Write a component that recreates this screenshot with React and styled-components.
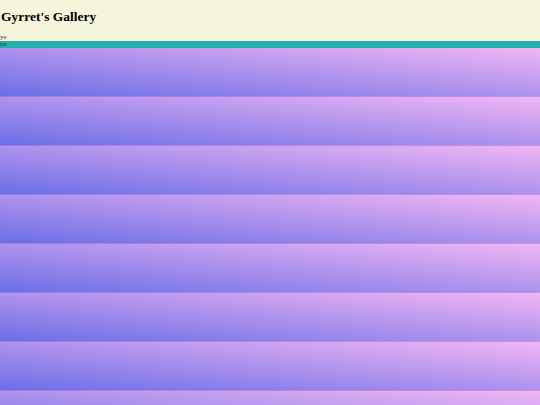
import React from 'react';
import styled, { createGlobalStyle } from 'styled-components';

const GlobalStyle = createGlobalStyle`
  html, body {
    margin: 0;
    padding: 0;
    background: #f5f5dc;
    font-family: "Liberation Serif", "Times New Roman", serif;
  }
`;

const Header = styled.header`
  background: #f5f5dc;
  padding-top: 8px;
`;

const Title = styled.h1`
  margin: 0 0 0 1px;
  font-size: 13.5px;
  line-height: 18px;
  font-weight: bold;
  color: #000;
`;

const Tiny = styled.div`
  font-size: 7px;
  line-height: 7px;
  color: #333;
  margin-top: ${p => p.$top || 0}px;
`;

const Nav = styled.nav`
  background: #20b2aa;
  height: 7px;
  overflow: hidden;
`;

const Tiles = styled.main`
  display: flex;
  flex-direction: column;
`;

const Tile = styled.div`
  height: 49px;
  flex-shrink: 0;
  box-sizing: border-box;
  background: linear-gradient(to top right, #6b6ee6, #f0b6f4);
  border-bottom: 1px solid rgba(120, 80, 200, 0.35);
`;

const tiles = Array.from({ length: 8 }, (_, i) => i);

export default function App() {
  return (
    <>
      <GlobalStyle />
      <Header>
        <Title>Gyrret's Gallery</Title>
        <Tiny $top={8}>ye</Tiny>
      </Header>
      <Nav>
        <Tiny>ye</Tiny>
      </Nav>
      <Tiles>
        {tiles.map(i => (
          <Tile key={i} />
        ))}
      </Tiles>
    </>
  );
}
